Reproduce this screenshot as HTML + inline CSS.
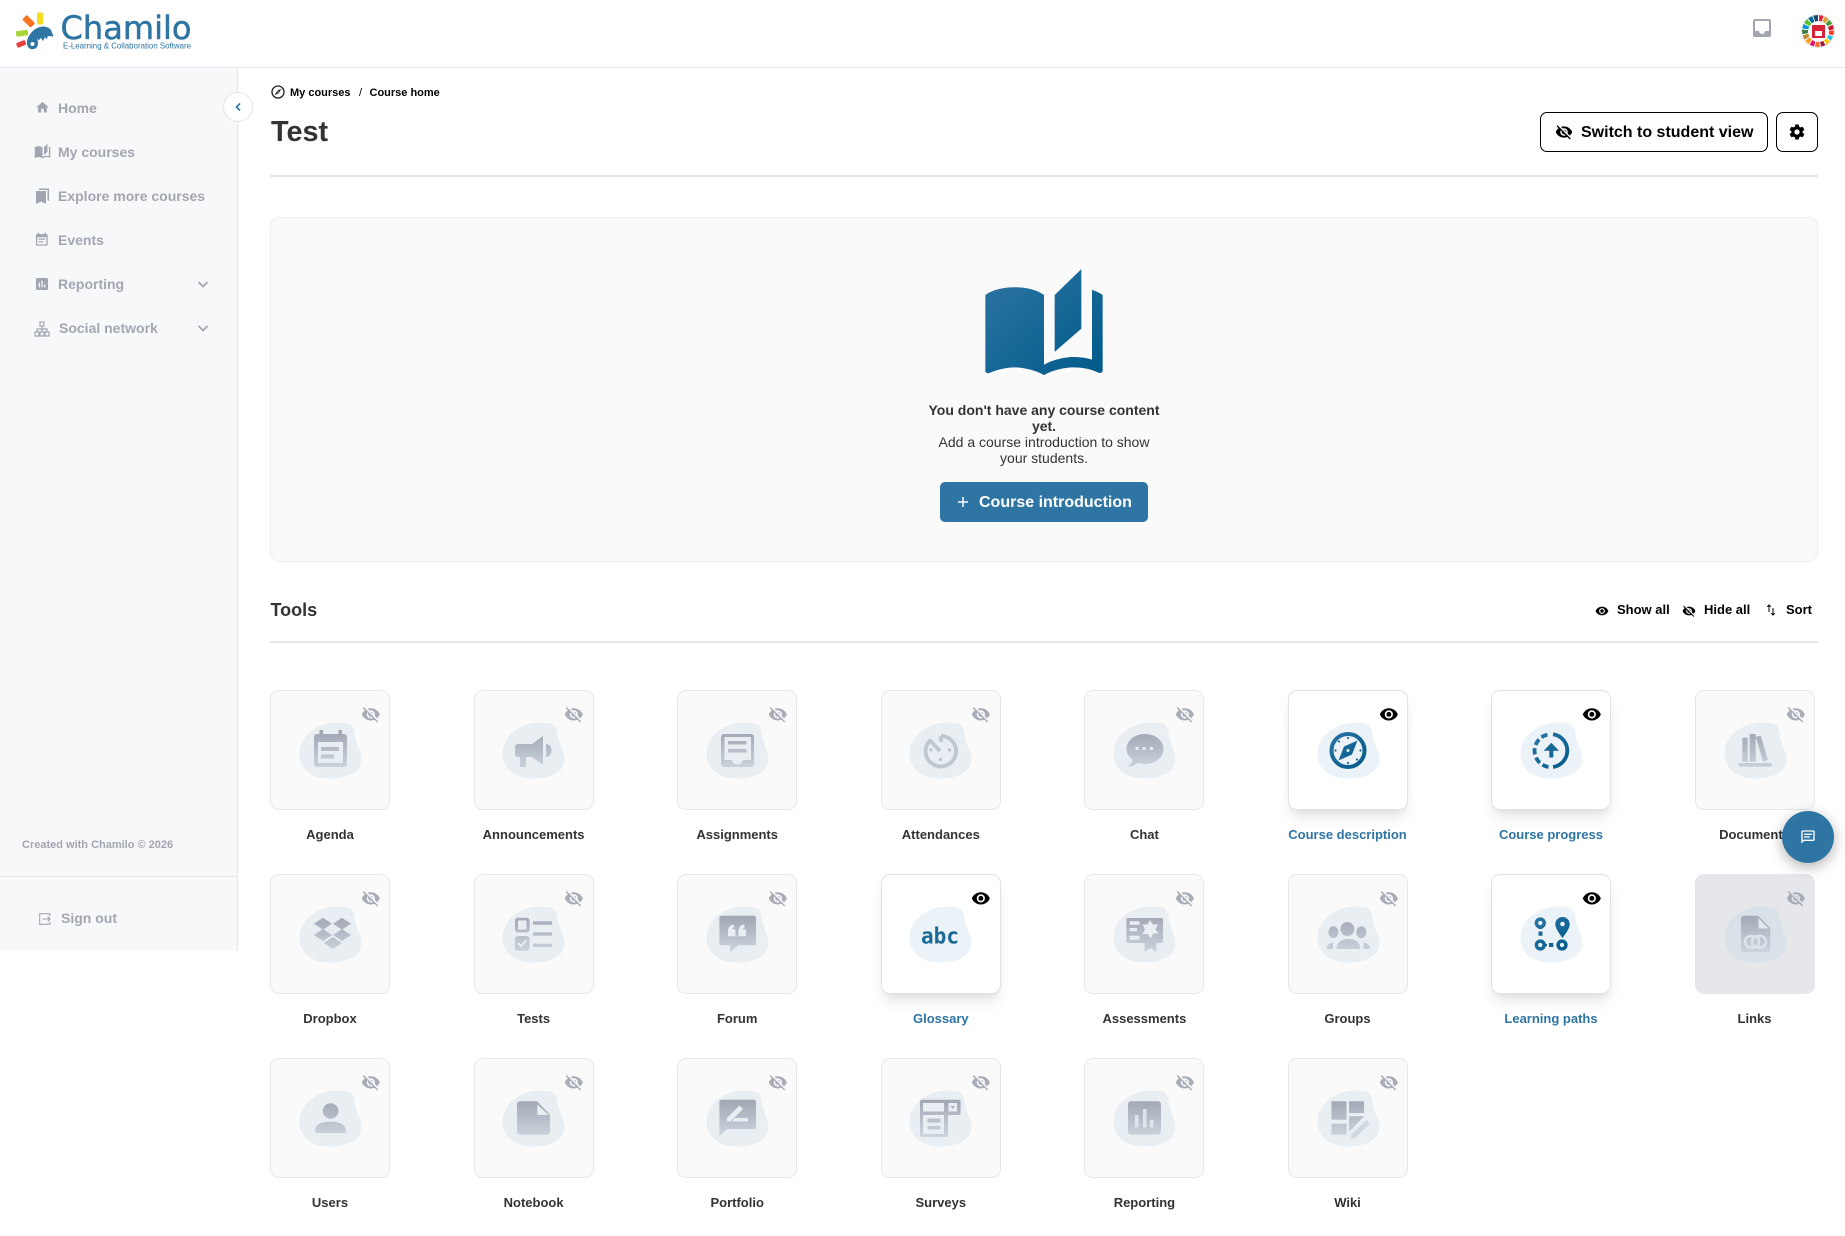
<!DOCTYPE html>
<html lang="en"><head><meta charset="utf-8"><title>Test</title>
<style>
*{box-sizing:border-box}
html,body{margin:0;padding:0;background:#fff}
body{width:1845px;height:1236px;overflow:hidden;position:relative;font-family:"Liberation Sans",sans-serif;color:#333}
.a{position:absolute}
.t{position:absolute;white-space:nowrap;font-weight:700}
.nav{position:absolute;left:58px;font-size:14px;font-weight:700;color:#a2a6b0;line-height:20px;white-space:nowrap}
.ic{position:absolute;fill:#a2a6b0}
.c{position:absolute;width:120px;height:120px;border:1px solid #e5e7eb;border-radius:9px;background:#fafafa}
.c svg{position:absolute;left:-.5px;top:-1px;width:120px;height:120px;overflow:visible}
.c.on{background:#fff;border-color:#e2e2e2;box-shadow:0 10px 15px -3px rgba(0,0,0,.1),0 4px 6px -2px rgba(0,0,0,.05)}
.c.hv{background:#e5e7eb;border-color:#e5e7eb}
.l{position:absolute;width:204px;text-align:center;font-size:13px;font-weight:700;line-height:20px;color:#333;white-space:nowrap}
.l.on{color:#2e75a3}
.hr{position:absolute;left:270px;width:1548px;height:2px;background:#e5e7eb}
.btn{position:absolute;top:112px;height:40px;border:1.5px solid #000;border-radius:7px;background:#fff}
</style></head><body>

<svg width="0" height="0" style="position:absolute"><defs>
<linearGradient id="g" gradientUnits="userSpaceOnUse" x1="0" y1="42" x2="0" y2="79"><stop offset="0" stop-color="#a1a7b4"/><stop offset="1" stop-color="#ccd5de"/></linearGradient>
<linearGradient id="p" gradientUnits="userSpaceOnUse" x1="40" y1="42" x2="78" y2="78"><stop offset="0" stop-color="#2e75a3"/><stop offset="1" stop-color="#005a8a"/></linearGradient>
<linearGradient id="bk" x1="0" y1="0" x2="1" y2="1"><stop offset="0" stop-color="#2e75a3"/><stop offset="1" stop-color="#005a8a"/></linearGradient>
<path id="blob" transform="translate(.5 .5)" d="M65 32C72 32 79 32.500 81 36C83 40 83 46 85 52C87 58 90 63 90 69C90 82 75 88 58 88C40 88 28 78 28 63C28 44 48 32 65 32Z"/>
<path id="eye" d="M12,9A3,3 0 0,0 9,12A3,3 0 0,0 12,15A3,3 0 0,0 15,12A3,3 0 0,0 12,9M12,17A5,5 0 0,1 7,12A5,5 0 0,1 12,7A5,5 0 0,1 17,12A5,5 0 0,1 12,17M12,4.5C7,4.5 2.73,7.61 1,12C2.73,16.39 7,19.5 12,19.5C17,19.5 21.27,16.39 23,12C21.27,7.61 17,4.5 12,4.5Z"/>
<path id="eo" d="M11.83,9L15,12.16C15,12.11 15,12.05 15,12A3,3 0 0,0 12,9C11.94,9 11.89,9 11.83,9M7.53,9.8L9.08,11.35C9.03,11.56 9,11.77 9,12A3,3 0 0,0 12,15C12.22,15 12.44,14.97 12.65,14.92L14.2,16.47C13.53,16.8 12.79,17 12,17A5,5 0 0,1 7,12C7,11.21 7.2,10.47 7.53,9.8M2,4.27L4.28,6.55L4.73,7C3.08,8.3 1.78,10 1,12C2.73,16.39 7,19.5 12,19.5C13.55,19.5 15.03,19.2 16.38,18.66L16.81,19.08L19.73,22L21,20.73L3.27,3M12,7A5,5 0 0,1 17,12C17,12.64 16.87,13.26 16.64,13.82L19.57,16.75C21.07,15.5 22.27,13.86 23,12C21.27,7.61 17,4.5 12,4.5C10.6,4.5 9.26,4.75 8,5.2L10.17,7.35C10.74,7.13 11.35,7 12,7Z"/>
</defs></svg>

<!-- header -->
<div class="a" style="left:0;top:67px;width:1845px;height:1px;background:#e5e7eb"></div>
<svg class="a" style="left:0;top:0" width="200" height="67" viewBox="0 0 200 67">
 <rect x="37" y="12.5" width="6" height="12" rx="1.5" fill="#f5dc1f"/>
 <rect x="22.5" y="18" width="12" height="6.5" rx="1.5" fill="#f97420" transform="rotate(45 28.5 21.5)"/>
 <rect x="16" y="30.5" width="12" height="5.5" rx="1.5" fill="#a6d538" transform="rotate(-8 22 33)"/>
 <rect x="16.5" y="41.5" width="9.5" height="5" rx="1.5" fill="#ea3f3f" transform="rotate(-22 21 44)"/>
 <path fill="#2e75a3" fill-rule="evenodd" d="M27 43C27 38 29 36 31 33C34 29 38 27 43 26.500C46 26.500 49 27.500 51 30L53.500 36.500L48 36L46.500 39.500L45 37L43 41L41 38L38.500 40.500L37.500 38C37.500 42 38.500 44 37.500 46C36 49 33.500 49.500 31 49C28.500 48.500 27 46 27 43ZM32.500 42A2 2 0 1 0 32.500 46A2 2 0 1 0 32.500 42Z"/>
 <text x="60.500" y="39" font-family="DejaVu Sans" font-size="32" fill="#2e75a3" stroke="#2e75a3" stroke-width=".5" textLength="131" lengthAdjust="spacingAndGlyphs">Chamilo</text>
 <text x="63" y="48.500" font-family="Liberation Sans" font-size="8" fill="#2e75a3" textLength="128" lengthAdjust="spacingAndGlyphs">E-Learning &amp; Collaboration Software</text>
</svg>
<svg class="a" style="left:1750px;top:16px" width="24" height="24" viewBox="0 0 24 24" fill="#a2a6b0"><path d="M19 15H15A3 3 0 0 1 12 18A3 3 0 0 1 9 15H5V5H19M19 3H5C3.89 3 3 3.9 3 5V19A2 2 0 0 0 5 21H19A2 2 0 0 0 21 19V5A2 2 0 0 0 19 3Z"/></svg>
<div class="a" style="left:1802px;top:15px;width:32px;height:32px;border-radius:50%;background:repeating-conic-gradient(#fff 0 4deg,transparent 4deg 21.176deg),conic-gradient(#e5243b 0 21deg,#dda63a 21deg 42deg,#4c9f38 42deg 63deg,#c5192d 63deg 85deg,#ff3a21 85deg 106deg,#26bde2 106deg 127deg,#fcc30b 127deg 148deg,#a21942 148deg 169deg,#fd6925 169deg 190deg,#dd1367 190deg 212deg,#fd9d24 212deg 233deg,#bf8b2e 233deg 254deg,#3f7e44 254deg 275deg,#0a97d9 275deg 296deg,#56c02b 296deg 318deg,#00689d 318deg 339deg,#19486a 339deg 360deg)"></div>
<div class="a" style="left:1801px;top:14px;width:34px;height:34px;border-radius:50%;border:1.500px solid #e4e6ea"></div>
<div class="a" style="left:1807.500px;top:20.500px;width:21px;height:21px;border-radius:50%;background:#fff"></div>
<div class="a" style="left:1811.500px;top:25px;width:13.500px;height:13px;background:#d6233a"></div>
<div class="a" style="left:1815px;top:31px;width:7px;height:5px;background:#fff"></div>

<!-- sidebar -->
<div class="a" style="left:0;top:68px;width:238px;height:883px;background:#f7f8fa;border-right:1px solid #e5e7eb"></div>
<div class="a" style="left:0;top:876px;width:237px;height:1px;background:#e5e7eb"></div>
<div class="a" style="left:223px;top:92px;width:30px;height:30px;border-radius:50%;background:#fff;border:1px solid #e5e7eb"></div>
<svg class="a" style="left:231px;top:100px" width="14" height="14" viewBox="0 0 14 14" fill="none" stroke="#2e75a3" stroke-width="1.6"><path d="M9 3.5L5.5 7L9 10.5"/></svg>

<svg class="ic" style="left:34.500px;top:100px" width="15" height="15" viewBox="0 0 24 24"><path d="M10,20V14H14V20H19V12H22L12,3L2,12H5V20H10Z"/></svg>
<div class="nav" style="top:98px">Home</div>
<svg class="ic" style="left:33.500px;top:143px" width="17" height="17" viewBox="0 0 24 24"><path d="M19 1L14 6V17L19 12.500V1M21 5V18.500C19.900 18.150 18.700 18 17.500 18C15.800 18 13.350 18.650 12 19.500V6C10.550 4.900 8.450 4.500 6.500 4.500C4.550 4.500 2.450 4.900 1 6V20.650C1 20.900 1.250 21.150 1.500 21.150C1.600 21.150 1.650 21.100 1.750 21.100C3.100 20.450 5.050 20 6.500 20C8.200 20 10.650 20.650 12 21.500C13.350 20.650 15.800 20 17.500 20C19.150 20 20.850 20.300 22.250 21.050C22.350 21.100 22.400 21.100 22.500 21.100C22.750 21.100 23 20.850 23 20.600V6C22.400 5.550 21.750 5.250 21 5Z"/></svg>
<div class="nav" style="top:142px">My courses</div>
<svg class="ic" style="left:34px;top:187px" width="17" height="18" viewBox="0 0 17 18"><path d="M2 4H12V17L7 14.500L2 17ZM5 1.500H15V14L13.500 13.200V3H5Z"/></svg>
<div class="nav" style="top:186px">Explore more courses</div>
<svg class="ic" style="left:34px;top:232.400px" width="15.600" height="15.600" viewBox="0 0 24 24"><path d="M14,14H7V16H14M19,19H5V8H19M19,3H18V1H16V3H8V1H6V3H5C3.890,3 3,3.900 3,5V19A2,2 0 0,0 5,21H19A2,2 0 0,0 21,19V5A2,2 0 0,0 19,3M17,10H7V12H17V10Z"/></svg>
<div class="nav" style="top:230px">Events</div>
<svg class="ic" style="left:34px;top:276px" width="16" height="16" viewBox="0 0 24 24"><path d="M19 3H5C3.900 3 3 3.900 3 5V19C3 20.100 3.900 21 5 21H19C20.100 21 21 20.100 21 19V5C21 3.900 20.100 3 19 3M9 17H7V10H9V17M13 17H11V7H13V17M17 17H15V13H17V17Z"/></svg>
<div class="nav" style="top:274px">Reporting</div>
<svg class="a" style="left:197px;top:278px" width="12" height="12" viewBox="0 0 12 12" fill="none" stroke="#a2a6b0" stroke-width="1.700"><path d="M1.500 4L6 8.500L10.500 4"/></svg>
<svg class="a" style="left:34px;top:321px" width="16" height="16" viewBox="0 0 16 16" fill="none" stroke="#a2a6b0" stroke-width="1.200"><rect x="6" y="1" width="4" height="4"/><rect x="1" y="11" width="4" height="4"/><rect x="6" y="11" width="4" height="4"/><rect x="11" y="11" width="4" height="4"/><path d="M8 5V11M3 11V8H13V11"/></svg>
<div class="nav" style="top:318px;left:59px">Social network</div>
<svg class="a" style="left:197px;top:322px" width="12" height="12" viewBox="0 0 12 12" fill="none" stroke="#a2a6b0" stroke-width="1.700"><path d="M1.500 4L6 8.500L10.500 4"/></svg>
<div class="t" style="left:22px;top:835px;font-size:11px;line-height:20px;color:#a2a6b0">Created with Chamilo © 2026</div>
<svg class="a" style="left:39px;top:912.500px" width="12" height="12" viewBox="0 0 12 12" fill="none" stroke="#a2a6b0" stroke-width="1.100"><path d="M10.800 3.200V.7H.7V11.300H10.800V8.800M3.500 6H11M8.700 3.700L11 6L8.700 8.300"/></svg>
<div class="nav" style="top:908px;left:61px">Sign out</div>

<!-- title -->
<svg class="a" style="left:270px;top:84px" width="16" height="16" viewBox="0 0 24 24" fill="#222"><path d="M7,17L10.500,10.500L17,7L13.500,13.500L7,17M12,11A1,1 0 0,0 11,12A1,1 0 0,0 12,13A1,1 0 0,0 13,12A1,1 0 0,0 12,11M12,2A10,10 0 0,1 22,12A10,10 0 0,1 12,22A10,10 0 0,1 2,12A10,10 0 0,1 12,2M12,4A8,8 0 0,0 4,12A8,8 0 0,0 12,20A8,8 0 0,0 20,12A8,8 0 0,0 12,4Z"/></svg>
<div class="t" style="left:290px;top:83px;font-size:11px;line-height:20px;color:#000">My courses</div>
<div class="t" style="left:359px;top:83px;font-size:11px;line-height:20px;color:#000;font-weight:400">/</div>
<div class="t" style="left:369.500px;top:83px;font-size:11px;line-height:20px;color:#000">Course home</div>
<div class="t" style="left:271px;top:113px;font-size:28.800px;line-height:38px;color:#333">Test</div>

<div class="btn" style="left:1540px;width:228px"></div>
<svg class="a" style="left:1555px;top:122.500px" width="18" height="18" viewBox="0 0 24 24" fill="#000"><use href="#eo"/></svg>
<div class="t" style="left:1581px;top:123px;font-size:16px;line-height:20px;color:#000">Switch to student view</div>
<div class="btn" style="left:1776px;width:42px"></div>
<svg class="a" style="left:1788px;top:123px" width="18" height="18" viewBox="0 0 24 24" fill="#000"><path d="M12,15.500A3.500,3.500 0 0,1 8.500,12A3.500,3.500 0 0,1 12,8.500A3.500,3.500 0 0,1 15.500,12A3.500,3.500 0 0,1 12,15.500M19.430,12.970C19.470,12.650 19.500,12.330 19.500,12C19.500,11.670 19.470,11.340 19.430,11L21.540,9.370C21.730,9.220 21.780,8.950 21.660,8.730L19.660,5.270C19.540,5.050 19.270,4.960 19.050,5.050L16.560,6.050C16.040,5.660 15.500,5.320 14.870,5.070L14.500,2.420C14.460,2.180 14.250,2 14,2H10C9.750,2 9.540,2.180 9.500,2.420L9.130,5.070C8.500,5.320 7.960,5.660 7.440,6.050L4.950,5.050C4.730,4.960 4.460,5.050 4.340,5.270L2.340,8.730C2.210,8.950 2.270,9.220 2.460,9.370L4.570,11C4.530,11.340 4.500,11.670 4.500,12C4.500,12.330 4.530,12.650 4.570,12.970L2.460,14.630C2.270,14.780 2.210,15.050 2.340,15.270L4.340,18.730C4.460,18.950 4.730,19.030 4.950,18.950L7.440,17.940C7.960,18.340 8.500,18.680 9.130,18.930L9.500,21.580C9.540,21.820 9.750,22 10,22H14C14.250,22 14.460,21.820 14.500,21.580L14.870,18.930C15.500,18.670 16.040,18.340 16.560,17.940L19.050,18.950C19.270,19.030 19.540,18.950 19.660,18.730L21.660,15.270C21.780,15.050 21.730,14.780 21.540,14.630L19.430,12.970Z"/></svg>
<div class="hr" style="top:175px"></div>

<!-- intro -->
<div class="a" style="left:270px;top:217px;width:1548px;height:345px;background:#fafafa;border:1px solid #eceef1;border-radius:9px"></div>
<svg class="a" style="left:979.500px;top:264px" width="128" height="124" viewBox="0 0 24 24" preserveAspectRatio="none"><path fill="url(#bk)" d="M19 1L14 6V17L19 12.500V1M21 5V18.500C19.900 18.150 18.700 18 17.500 18C15.800 18 13.350 18.650 12 19.500V6C10.550 4.900 8.450 4.500 6.500 4.500C4.550 4.500 2.450 4.900 1 6V20.650C1 20.900 1.250 21.150 1.500 21.150C1.600 21.150 1.650 21.100 1.750 21.100C3.100 20.450 5.050 20 6.500 20C8.200 20 10.650 20.650 12 21.500C13.350 20.650 15.800 20 17.500 20C19.150 20 20.850 20.300 22.250 21.050C22.350 21.100 22.400 21.100 22.500 21.100C22.750 21.100 23 20.850 23 20.600V6C22.400 5.550 21.750 5.250 21 5Z"/></svg>
<div class="a" style="left:844px;top:402px;width:400px;text-align:center;font-size:14px;line-height:16px;color:#333"><b>You don't have any course content<br>yet.</b><br>Add a course introduction to show<br>your students.</div>
<div class="a" style="left:940px;top:482px;width:208px;height:40px;background:#2e75a3;border-radius:5px"></div>
<svg class="a" style="left:957px;top:496px" width="12" height="12" viewBox="0 0 12 12" stroke="#fff" stroke-width="1.500"><path d="M6 1V11M1 6H11"/></svg>
<div class="t" style="left:979px;top:493px;font-size:16px;line-height:20px;color:#fff">Course introduction</div>

<!-- tools header -->
<div class="t" style="left:270.500px;top:599px;font-size:18px;line-height:22px;color:#333">Tools</div>
<svg class="a" style="left:1594.500px;top:603.500px" width="14" height="14" viewBox="0 0 24 24" fill="#000"><use href="#eye"/></svg>
<div class="t" style="left:1617px;top:600px;font-size:13px;line-height:20px;color:#000">Show all</div>
<svg class="a" style="left:1682px;top:603.500px" width="14" height="14" viewBox="0 0 24 24" fill="#000"><use href="#eo"/></svg>
<div class="t" style="left:1704px;top:600px;font-size:13px;line-height:20px;color:#000">Hide all</div>
<svg class="a" style="left:1766px;top:604px" width="10" height="12" viewBox="0 0 10 12" fill="none" stroke="#000" stroke-width="1"><path d="M3 8V1M1.200 2.800L3 1L4.800 2.800M7 4V11M5.200 9.200L7 11L8.800 9.200"/></svg>
<div class="t" style="left:1786px;top:600px;font-size:13px;line-height:20px;color:#000">Sort</div>
<div class="hr" style="top:641px"></div>

<!-- row 1 -->
<div class="c" style="left:270px;top:690px"><svg viewBox="0 0 120 120"><use href="#blob" fill="#e9eef3"/><g fill="url(#g)"><rect x="43" y="44" width="33" height="33" rx="3"/><rect x="48.500" y="40" width="3.500" height="6"/><rect x="67.500" y="40" width="3.500" height="6"/></g><rect x="47" y="52" width="25" height="21" fill="#e9eef3"/><g fill="url(#g)"><rect x="50" y="57" width="18" height="4"/><rect x="50" y="64.500" width="13" height="4"/></g><use href="#eo" fill="#a9adb8" transform="translate(90 14.500) scale(.82)"/></svg></div>
<div class="l" style="left:228px;top:825px">Agenda</div>

<div class="c" style="left:473.600px;top:690px"><svg viewBox="0 0 120 120"><use href="#blob" fill="#e9eef3"/><path fill="url(#g)" d="M44 54H58L69 46V75L58 67H52V77H46V67H44A3 3 0 0 1 41 64V57A3 3 0 0 1 44 54ZM72 54A5.500 6.500 0 0 1 72 67Z"/><use href="#eo" fill="#a9adb8" transform="translate(90 14.500) scale(.82)"/></svg></div>
<div class="l" style="left:431.600px;top:825px">Announcements</div>

<div class="c" style="left:677.200px;top:690px"><svg viewBox="0 0 120 120"><use href="#blob" fill="#e9eef3"/><rect x="43" y="44" width="33" height="33" rx="3" fill="url(#g)"/><path fill="#e9eef3" d="M46.500 47H73V70H65A5.500 4.500 0 0 1 54 70H46.500Z"/><g fill="url(#g)"><rect x="50" y="51" width="18.500" height="3.500"/><rect x="50" y="59" width="18.500" height="3.500"/></g><use href="#eo" fill="#a9adb8" transform="translate(90 14.500) scale(.82)"/></svg></div>
<div class="l" style="left:635.200px;top:825px">Assignments</div>

<div class="c" style="left:880.800px;top:690px"><svg viewBox="0 0 120 120"><use href="#blob" fill="#e9eef3"/><g fill="none" stroke="#bfc7d1" stroke-width="3.800"><path d="M60 46A15.200 15.200 0 1 1 48.800 50.700"/><path d="M48 49.500L59 61M60 46V52"/></g><g fill="#bfc7d1"><circle cx="50" cy="60" r="1.700"/><circle cx="68.500" cy="60" r="1.700"/><circle cx="59.500" cy="69.500" r="1.700"/></g><use href="#eo" fill="#a9adb8" transform="translate(90 14.500) scale(.82)"/></svg></div>
<div class="l" style="left:838.800px;top:825px">Attendances</div>

<div class="c" style="left:1084.400px;top:690px"><svg viewBox="0 0 120 120"><use href="#blob" fill="#e9eef3"/><path fill="url(#g)" d="M60 44C70.200 44 78.500 50.700 78.500 59C78.500 67.300 70.200 74 60 74C57.500 74 55 73.600 52.800 72.800C50 75.500 46 77 42 77C45 75 47.200 72.500 47.700 69.800C43.800 67 41.500 63.200 41.500 59C41.500 50.700 49.800 44 60 44Z"/><g fill="#e9eef3"><rect x="50.500" y="57" width="3" height="3"/><rect x="57.500" y="57" width="3" height="3"/><rect x="65" y="57" width="3" height="3"/></g><use href="#eo" fill="#a9adb8" transform="translate(90 14.500) scale(.82)"/></svg></div>
<div class="l" style="left:1042.400px;top:825px">Chat</div>

<div class="c on" style="left:1288px;top:690px"><svg viewBox="0 0 120 120"><use href="#blob" fill="#ecf3f8"/><g transform="translate(-.5 0)"><circle cx="59.500" cy="60.500" r="16.500" fill="none" stroke="url(#p)" stroke-width="4"/><path fill="url(#p)" d="M69 50.500L63.500 64.500L50 70.500L55.500 56.500Z"/><circle cx="59.500" cy="60.500" r="1.500" fill="#ecf3f8"/><g fill="#1a6a97"><circle cx="59.500" cy="48" r="1.100"/><circle cx="59.500" cy="73" r="1.100"/><circle cx="47" cy="60.500" r="1.100"/><circle cx="72" cy="60.500" r="1.100"/><circle cx="50.500" cy="51.500" r="1.100"/><circle cx="68.500" cy="69.500" r="1.100"/></g></g><use href="#eye" fill="#000" transform="translate(90 14.500) scale(.82)"/></svg></div>
<div class="l on" style="left:1245.500px;top:825px">Course description</div>

<div class="c on" style="left:1491px;top:690px"><svg viewBox="0 0 120 120"><use href="#blob" fill="#ecf3f8"/><g fill="none" stroke="url(#p)" stroke-width="3.800"><path d="M61 44.300A16.500 16.500 0 0 1 61 77"/><path d="M56.500 77A16.500 16.500 0 0 1 56.500 44.400" stroke-dasharray="6.500 3.200"/></g><path fill="url(#p)" d="M59.300 52.700L67 60.700H61.300V67.500H57.300V60.700H51.700Z"/><use href="#eye" fill="#000" transform="translate(90 14.500) scale(.82)"/></svg></div>
<div class="l on" style="left:1449px;top:825px">Course progress</div>

<div class="c" style="left:1695.200px;top:690px"><svg viewBox="0 0 120 120"><use href="#blob" fill="#e9eef3"/><path fill="url(#g)" d="M46.300 47.700H51.700V71.700H46.300ZM53.700 44H59.700V71.700H53.700ZM59.700 46.700L64.700 45.700L72 70L67 71.700Z"/><rect x="42.700" y="73" width="33" height="3.700" fill="#c5ced8"/><use href="#eo" fill="#a9adb8" transform="translate(90 14.500) scale(.82)"/></svg></div>
<div class="l" style="left:1652.500px;top:825px">Documents</div>

<!-- row 2 -->
<div class="c" style="left:270px;top:874px"><svg viewBox="0 0 120 120"><use href="#blob" fill="#e9eef3"/><path fill="url(#g)" d="M52 43.700L61 49.700L52 55.700L43 49.700ZM71 43.700L80 49.700L71 55.700L62 49.700ZM52 55L61 61L52 67L43 61ZM71 55L80 61L71 67L62 61ZM61.800 63L70.800 69L61.800 75L52.800 69Z"/><use href="#eo" fill="#a9adb8" transform="translate(90 14.500) scale(.82)"/></svg></div>
<div class="l" style="left:228px;top:1009px">Dropbox</div>

<div class="c" style="left:473.600px;top:874px"><svg viewBox="0 0 120 120"><use href="#blob" fill="#e9eef3"/><g fill="url(#g)"><rect x="41" y="43.700" width="14.500" height="14.700" rx="3"/><rect x="41" y="62" width="14.500" height="14.700" rx="3"/><rect x="59" y="47.300" width="19" height="3.400"/><rect x="59" y="58.300" width="19" height="3.400"/><rect x="59" y="69.700" width="19" height="3.400"/></g><rect x="44" y="46.500" width="8.500" height="9" fill="#e9eef3"/><path d="M44 69L47 72L52.500 66" fill="none" stroke="#e9eef3" stroke-width="2"/><use href="#eo" fill="#a9adb8" transform="translate(90 14.500) scale(.82)"/></svg></div>
<div class="l" style="left:431.600px;top:1009px">Tests</div>

<div class="c" style="left:677.200px;top:874px"><svg viewBox="0 0 120 120"><use href="#blob" fill="#e9eef3"/><path fill="url(#g)" d="M43.400 41.700H76A2 2 0 0 1 78 43.700V69.300A2 2 0 0 1 76 71.300H60.400L52 78V71.300H43.400A2 2 0 0 1 41.400 69.300V43.700A2 2 0 0 1 43.400 41.700Z"/><path fill="#e9eef3" d="M50 57.500C50 53 52.500 51 55.500 50.500L56.500 53C55 53.500 54.500 54.500 54.500 55.500H57.500V62.300H50ZM60.500 57.500C60.500 53 63 51 66 50.500L67 53C65.500 53.500 65 54.500 65 55.500H68V62.300H60.500Z"/><use href="#eo" fill="#a9adb8" transform="translate(90 14.500) scale(.82)"/></svg></div>
<div class="l" style="left:635.200px;top:1009px">Forum</div>

<div class="c on" style="left:880.800px;top:874px"><svg viewBox="0 0 120 120"><use href="#blob" fill="#ecf3f8"/><text x="40" y="69.700" font-family="DejaVu Sans Mono" font-weight="700" font-size="22" fill="#1a6a97" textLength="38" lengthAdjust="spacingAndGlyphs">abc</text><use href="#eye" fill="#000" transform="translate(90 14.500) scale(.82)"/></svg></div>
<div class="l on" style="left:838.800px;top:1009px">Glossary</div>

<div class="c" style="left:1084.400px;top:874px"><svg viewBox="0 0 120 120"><use href="#blob" fill="#e9eef3"/><path fill="url(#g)" d="M43.400 44H76A2 2 0 0 1 78 46V67A2 2 0 0 1 76 69H71.400V78L65.500 74L59.600 78V69H43.400A2 2 0 0 1 41.400 67V46A2 2 0 0 1 43.400 44Z"/><path fill="#e9eef3" d="M65 46L67.700 50.500L73 50.200L70.500 55L73.500 59.500L68.200 59.800L65.500 64.500L62.800 60L57.500 60L60 55.200L57.500 50.500L62.500 50.500ZM44.600 47.300H54.500V50.700H44.600ZM44.600 54H52V57.300H44.600ZM44.600 61.700H54.500V65.700H44.600Z"/><use href="#eo" fill="#a9adb8" transform="translate(90 14.500) scale(.82)"/></svg></div>
<div class="l" style="left:1042.400px;top:1009px">Assessments</div>

<div class="c" style="left:1288px;top:874px"><svg viewBox="0 0 120 120"><use href="#blob" fill="#e9eef3"/><g fill="url(#g)"><circle cx="58.400" cy="55" r="7"/><ellipse cx="44.400" cy="58.300" rx="5" ry="6"/><ellipse cx="72.300" cy="58.300" rx="5" ry="6"/><path d="M47.500 75C47.500 69 52 65 59.500 65C67 65 71.400 69 71.400 75ZM37.500 75C37.500 71.500 40 69 44 68.500V75ZM81 75C81 71.500 78.500 69 74.600 68.500V75Z"/></g><use href="#eo" fill="#a9adb8" transform="translate(90 14.500) scale(.82)"/></svg></div>
<div class="l" style="left:1245.500px;top:1009px">Groups</div>

<div class="c on" style="left:1491px;top:874px"><svg viewBox="0 0 120 120"><use href="#blob" fill="#ecf3f8"/><g fill="url(#p)"><path d="M70.500 43C74.500 43 77.700 46.200 77.700 50.200C77.700 54.500 73 60.500 70.500 64C68 60.500 63.300 54.500 63.300 50.200C63.300 46.200 66.500 43 70.500 43Z"/><rect x="46.500" y="57.500" width="4" height="4.300"/><rect x="57" y="69" width="4.300" height="4"/><rect x="46.500" y="53" width="4" height="2"/><path d="M53 70H55V72H53Z"/></g><circle cx="70.500" cy="50" r="2.300" fill="#ecf3f8"/><g fill="#ecf3f8" stroke="url(#p)" stroke-width="3.500"><circle cx="48.300" cy="49" r="3.900"/><circle cx="48.300" cy="71" r="3.900"/><circle cx="70" cy="71" r="3.900"/></g><use href="#eye" fill="#000" transform="translate(90 14.500) scale(.82)"/></svg></div>
<div class="l on" style="left:1449px;top:1009px">Learning paths</div>

<div class="c hv" style="left:1695.200px;top:874px"><svg viewBox="0 0 120 120"><use href="#blob" fill="#d9e1e9"/><path fill="url(#g)" opacity=".95" d="M48 41.700H62L74.300 54V75.300A3 3 0 0 1 71.300 78.300H48A3 3 0 0 1 45 75.300V44.700A3 3 0 0 1 48 41.700Z"/><path fill="#e2e7ec" d="M62.500 44L72.500 54.500H62.500Z"/><g fill="none" stroke="#dde3e9" stroke-width="2.600"><rect x="49" y="62" width="14" height="11.500" rx="5.700"/><rect x="56" y="62" width="14" height="11.500" rx="5.700"/></g><use href="#eo" fill="#a9adb8" transform="translate(90 14.500) scale(.82)"/></svg></div>
<div class="l" style="left:1652.500px;top:1009px">Links</div>

<!-- row 3 -->
<div class="c" style="left:270px;top:1058px"><svg viewBox="0 0 120 120"><use href="#blob" fill="#e9eef3"/><g fill="url(#g)"><circle cx="59.600" cy="53" r="7.800"/><path d="M44.300 75V71.500C44.300 66.500 51 63.700 59.500 63.700C68 63.700 74.600 66.500 74.600 71.500V75Z"/></g><use href="#eo" fill="#a9adb8" transform="translate(90 14.500) scale(.82)"/></svg></div>
<div class="l" style="left:228px;top:1193px">Users</div>

<div class="c" style="left:473.600px;top:1058px"><svg viewBox="0 0 120 120"><use href="#blob" fill="#e9eef3"/><path fill="url(#g)" d="M46 43.300H63L76 56.500V73.700A3 3 0 0 1 73 76.700H46A3 3 0 0 1 43 73.700V46.300A3 3 0 0 1 46 43.300Z"/><path fill="#e9eef3" d="M63.300 46.500L74.500 57H63.300Z"/><use href="#eo" fill="#a9adb8" transform="translate(90 14.500) scale(.82)"/></svg></div>
<div class="l" style="left:431.600px;top:1193px">Notebook</div>

<div class="c" style="left:677.200px;top:1058px"><svg viewBox="0 0 120 120"><use href="#blob" fill="#e9eef3"/><path fill="url(#g)" d="M43.400 41.700H76A2 2 0 0 1 78 43.700V69A2 2 0 0 1 76 71H49L41.400 78V43.700A2 2 0 0 1 43.400 41.700Z"/><path fill="#e9eef3" d="M49 60L61.500 47.500L65 51L52.500 63.500H49ZM57 60H70V63.500H54Z"/><use href="#eo" fill="#a9adb8" transform="translate(90 14.500) scale(.82)"/></svg></div>
<div class="l" style="left:635.200px;top:1193px">Portfolio</div>

<div class="c" style="left:880.800px;top:1058px"><svg viewBox="0 0 120 120"><use href="#blob" fill="#e9eef3"/><path fill="url(#g)" d="M41 41.700H77.600A2 2 0 0 1 79.600 43.700V55A2 2 0 0 1 77.600 57H67V77A2 2 0 0 1 65 79H41A2 2 0 0 1 39 77V43.700A2 2 0 0 1 41 41.700Z"/><g fill="#e9eef3"><rect x="42" y="45" width="21" height="8.500"/><rect x="67.500" y="45" width="8.500" height="8.500"/><rect x="42" y="57" width="21" height="19"/></g><g fill="url(#g)"><rect x="46.500" y="60.500" width="13" height="4"/><rect x="46.500" y="68" width="13" height="3.500"/><path d="M69.500 48H74L71.800 51Z"/></g><use href="#eo" fill="#a9adb8" transform="translate(90 14.500) scale(.82)"/></svg></div>
<div class="l" style="left:838.800px;top:1193px">Surveys</div>

<div class="c" style="left:1084.400px;top:1058px"><svg viewBox="0 0 120 120"><use href="#blob" fill="#e9eef3"/><rect x="43" y="43.300" width="33" height="33.400" rx="3" fill="url(#g)"/><g fill="#dfe5eb"><rect x="50" y="57" width="3.500" height="12.500"/><rect x="58" y="51" width="3.500" height="18.500"/><rect x="65" y="62" width="3.500" height="7.500"/></g><use href="#eo" fill="#a9adb8" transform="translate(90 14.500) scale(.82)"/></svg></div>
<div class="l" style="left:1042.400px;top:1193px">Reporting</div>

<div class="c" style="left:1288px;top:1058px"><svg viewBox="0 0 120 120"><use href="#blob" fill="#e9eef3"/><g fill="url(#g)"><rect x="42.500" y="43.300" width="15" height="18.400"/><rect x="60" y="43.300" width="15" height="11.700"/><rect x="42.500" y="65.700" width="15" height="11"/><path d="M60 58.300H75L60 74Z"/></g><path fill="#cfd7df" d="M77.500 62.300L81 65.500L65.500 80.500H62V76.800Z"/><use href="#eo" fill="#a9adb8" transform="translate(90 14.500) scale(.82)"/></svg></div>
<div class="l" style="left:1245.500px;top:1193px">Wiki</div>

<!-- fab -->
<div class="a" style="left:1782px;top:811px;width:52px;height:52px;border-radius:50%;background:#2e75a3;box-shadow:0 4px 14px rgba(0,0,0,.3)"></div>
<svg class="a" style="left:1800px;top:829px" width="16" height="16" viewBox="0 0 24 24" fill="#fff"><path d="M20,2H4A2,2 0 0,0 2,4V22L6,18H20A2,2 0 0,0 22,16V4C22,2.890 21.100,2 20,2M20,16H5.170L4,17.170V4H20V16M6,7H18V9H6V7M6,11H15V13H6V11Z"/></svg>
</body></html>
